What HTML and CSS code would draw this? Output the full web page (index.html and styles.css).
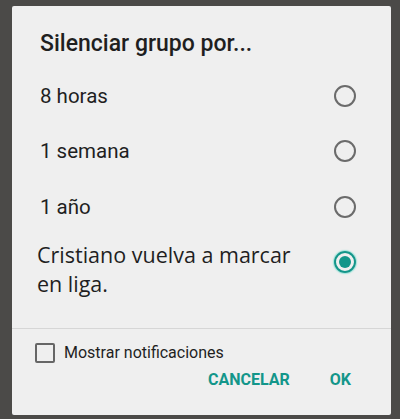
FILE: index.html
```html
<!DOCTYPE html>
<html lang="es">
<head>
  <meta charset="UTF-8" />
  <meta name="viewport" content="width=device-width, initial-scale=1.0" />
  <title>Silenciar grupo</title>
  <link rel="stylesheet" href="styles.css">
</head>
<body>
  <div class="dialog">
    <h1>Silenciar grupo por...</h1>

    <div class="options">
      <label class="option">
        <span class="label">8 horas</span>
        <span class="radio"></span>
      </label>
      <label class="option">
        <span class="label">1 semana</span>
        <span class="radio"></span>
      </label>
      <label class="option">
        <span class="label">1 año</span>
        <span class="radio"></span>
      </label>
      <label class="option custom">
        <span class="label">Cristiano vuelva a marcar en liga.</span>
        <span class="radio checked"></span>
      </label>
    </div>

    <div class="footer">
      <label class="check">
        <span class="box"></span>
        <span>Mostrar notificaciones</span>
      </label>
      <div class="actions">
        <button class="cancel">CANCELAR</button>
        <button class="ok">OK</button>
      </div>
    </div>
  </div>
</body>
</html>
```

FILE: styles.css
```css
* {
  box-sizing: border-box;
}

body {
  margin: 0;
  padding: 6px 0 0 12px;
  background: #4b4a48;
  font-family: Roboto, "Noto Sans", sans-serif;
  color: #1f1f1f;
}

.dialog {
  width: 379px;
  height: 409px;
  background: #efefef;
  border-radius: 2px;
  display: flex;
  flex-direction: column;
}

h1 {
  margin: 0;
  padding: 24px 0 0 28px;
  height: 62px;
  font-size: 23px;
  font-weight: 500;
  line-height: 28px;
}

.options {
  padding: 0 0 0 28px;
}

.option {
  display: flex;
  align-items: center;
  justify-content: space-between;
  height: 55.5px;
  padding-right: 35px;
  font-size: 20.5px;
}

.option .label {
  line-height: 28px;
}

.custom {
  height: 76px;
  align-items: flex-start;
  padding-top: 5px;
}

.custom .label {
  width: 266px;
  margin-left: -3px;
  font-family: "Open Sans", sans-serif;
  font-size: 21.5px;
  line-height: 29px;
}

.custom .radio {
  margin-top: 11px;
}

.radio {
  width: 22px;
  height: 22px;
  border: 2px solid #6b6b6b;
  border-radius: 50%;
  flex-shrink: 0;
}

.radio.checked {
  border-color: #13968a;
  position: relative;
  box-shadow: 0 0 1px 1px rgba(80, 220, 200, 0.5);
}

.radio.checked::after {
  content: "";
  position: absolute;
  left: 3px;
  top: 3px;
  width: 12px;
  height: 12px;
  border-radius: 50%;
  background: #13968a;
}

.footer {
  border-top: 1px solid #d6d6d6;
  margin-top: 17px;
  padding: 14px 0 0 23px;
}

.check {
  display: flex;
  align-items: center;
  gap: 9px;
  font-size: 16px;
}

.box {
  width: 20px;
  height: 20px;
  border: 2px solid #666;
  border-radius: 2px;
}

.actions {
  display: flex;
  justify-content: flex-end;
  gap: 40px;
  padding: 7px 40px 0 0;
}

button {
  border: none;
  background: none;
  padding: 0;
  font-family: Roboto, sans-serif;
  font-size: 16px;
  font-weight: bold;
  color: #13968a;
}
```
